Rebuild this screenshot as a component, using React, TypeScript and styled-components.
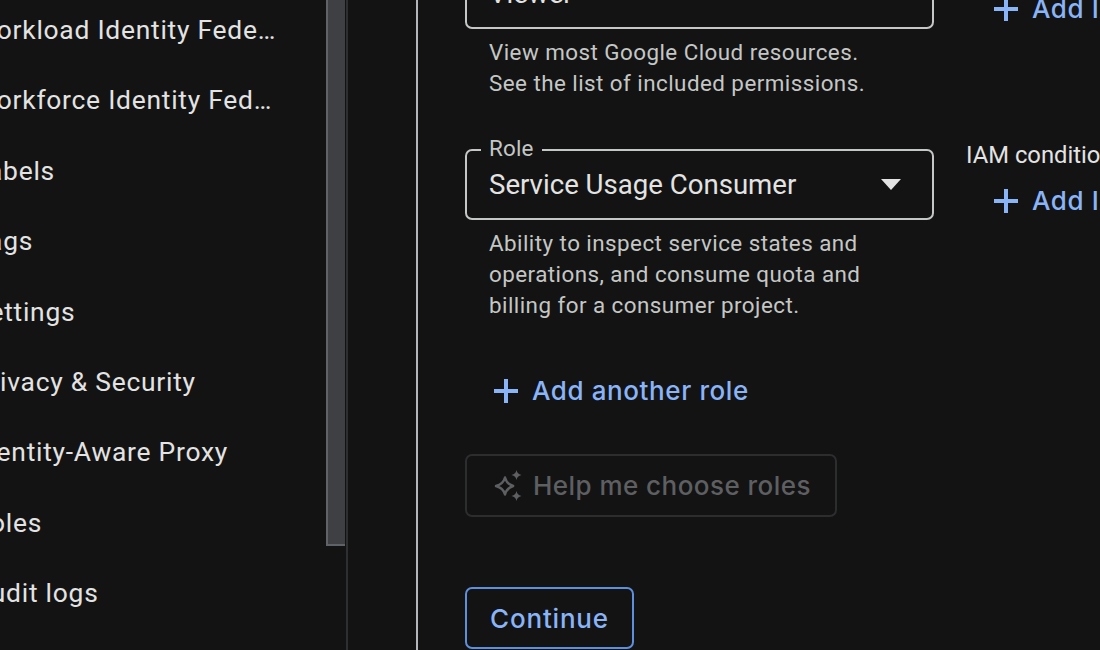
import React from "react";
import styled, { createGlobalStyle } from "styled-components";

const GlobalStyle = createGlobalStyle`
  html, body { margin: 0; padding: 0; background: #131314; }
  * { box-sizing: border-box; }
`;

const Page = styled.div`
  display: flex;
  width: 1100px;
  height: 650px;
  overflow: hidden;
  background: #131314;
  font-family: Roboto, "Liberation Sans", sans-serif;
  color: #e3e3e3;
`;

const Sidebar = styled.nav`
  position: relative;
  flex: none;
  width: 348px;
  height: 100%;
  overflow: hidden;
  border-right: 2px solid #2d2f31;
`;

const NavList = styled.div`
  display: flex;
  flex-direction: column;
  width: 306px;
  margin: -5px 0 0 -27px;
`;

const NavItem = styled.div`
  height: 70.4px;
  line-height: 70.4px;
  font-size: 26.4px;
  letter-spacing: 0.75px;
  color: #e3e3e3;
  white-space: nowrap;
  overflow: hidden;
  text-overflow: ellipsis;
`;

const ScrollThumb = styled.div`
  position: absolute;
  top: 0;
  left: 326px;
  width: 19px;
  height: 546px;
  background: #3e4043;
  border: 2px solid #5f6368;
  border-top: none;
  border-right: none;
`;

const Content = styled.main`
  flex: none;
  margin-left: 68px;
  border-left: 2px solid #b4b6b9;
  padding: 0 0 0 47px;
  height: 100%;
  width: 684px;
`;

const Form = styled.div`
  display: flex;
  flex-direction: column;
  margin-top: -42px;
`;

const RoleRow = styled.div`
  display: grid;
  grid-template-columns: 469px 300px;
  column-gap: 32px;
  margin-bottom: 50px;
  width: 800px;
`;

const Field = styled.div`
  position: relative;
  display: flex;
  align-items: center;
  justify-content: space-between;
  height: 71px;
  padding: 0 31px 0 22px;
  border: 2px solid #c4c7c5;
  border-radius: 7px;
  font-size: 27.6px;
  line-height: 1;
`;

const FieldLabel = styled.span`
  position: absolute;
  top: -16px;
  left: 14px;
  padding: 0 8px 0 8px;
  background: #131314;
  font-size: 22.4px;
  line-height: 26px;
  letter-spacing: 0.2px;
  color: #c4c7c5;
`;

const Hint = styled.p`
  margin: 8px 0 0;
  padding-left: 24px;
  font-size: 22.4px;
  line-height: 31px;
  letter-spacing: 0.45px;
  color: #c4c7c5;
`;

const SideColumn = styled.div<{ $first?: boolean }>`
  display: flex;
  flex-direction: column;
  margin-top: ${({ $first }) => ($first ? "20px" : "-9px")};
`;

const SideLabel = styled.div`
  font-size: 23.8px;
  line-height: 30px;
  white-space: nowrap;
  color: #e3e3e3;
`;

const AddLink = styled.div<{ $indent: number }>`
  display: flex;
  align-items: center;
  gap: 14px;
  padding-left: ${({ $indent }) => $indent}px;
  font-family: Inter, Roboto, sans-serif;
  font-weight: 500;
  font-size: 26px;
  letter-spacing: 0.6px;
  line-height: 42px;
  color: #8ab4f8;
  white-space: nowrap;
`;

const SideAdd = styled(AddLink)`
  margin-top: 10px;
`;

const AnotherRole = styled(AddLink)`
  margin-top: -1px;
`;

const HelpButton = styled.div`
  display: flex;
  align-items: center;
  gap: 9px;
  width: 372px;
  height: 63px;
  margin-top: 42px;
  padding-left: 26px;
  border: 2px solid #2c2d2f;
  border-radius: 7px;
  font-family: Inter, Roboto, sans-serif;
  font-weight: 500;
  font-size: 26px;
  letter-spacing: 0.45px;
  color: #5e5f61;
  white-space: nowrap;
`;

const ContinueButton = styled.div`
  display: flex;
  align-items: center;
  justify-content: center;
  width: 169px;
  height: 62px;
  margin-top: 70px;
  border: 2px solid #5d8fdc;
  border-radius: 7px;
  font-family: Inter, Roboto, sans-serif;
  font-weight: 500;
  font-size: 26px;
  letter-spacing: 0.8px;
  color: #8ab4f8;
`;

const PlusIcon = () => (
  <svg width="24" height="24" viewBox="0 0 24 24" fill="#8ab4f8" style={{ flex: "none" }}>
    <path d="M24 14h-10v10h-4V14H0v-4h10V0h4v10h10v4z" />
  </svg>
);

const CaretIcon = () => (
  <svg width="20" height="11" viewBox="0 0 20 11" fill="#e3e3e3" style={{ flex: "none" }}>
    <path d="M0 0h20L10 11z" />
  </svg>
);

const SparkIcon = () => (
  <svg width="31" height="32" viewBox="0 0 31 32" fill="none" style={{ flex: "none" }}>
    <path d="M12 7.5c1.2 4.8 3.4 7 8.2 8.5-4.8 1.5-7 3.7-8.2 8.5C10.8 19.700 8.600 17.500 3 16c5.600-1.500 7.800-3.700 9-8.500z" stroke="#5e5f61" strokeWidth="2.400" strokeLinejoin="round" />
    <path d="M23.500 0c.7 3 1.800 4.100 5 5-3.200.9-4.300 2-5 5-.7-3-1.800-4.100-5-5 3.200-.9 4.300-2 5-5z" fill="#5e5f61" />
    <path d="M23.500 21c.7 3 1.800 4.100 5 5-3.200.9-4.300 2-5 5-.7-3-1.800-4.100-5-5 3.200-.9 4.300-2 5-5z" fill="#5e5f61" />
  </svg>
);

const navItems = [
  "Workload Identity Federation",
  "Workforce Identity Federation",
  "Labels",
  "Tags",
  "Settings",
  "Privacy & Security",
  "Identity-Aware Proxy",
  "Roles",
  "Audit logs",
];

export default function App() {
  return (
    <Page>
      <GlobalStyle />
      <Sidebar>
        <NavList>
          {navItems.map((item) => (
            <NavItem key={item}>{item}</NavItem>
          ))}
        </NavList>
        <ScrollThumb />
      </Sidebar>
      <Content>
        <Form>
          <RoleRow>
            <div>
              <Field>
                Viewer
                <CaretIcon />
              </Field>
              <Hint>
                View most Google Cloud resources.
                <br />
                See the list of included permissions.
              </Hint>
            </div>
            <SideColumn $first>
              <SideAdd $indent={28}>
                <PlusIcon />
                Add IAM condition
              </SideAdd>
            </SideColumn>
          </RoleRow>
          <RoleRow>
            <div>
              <Field>
                <FieldLabel>Role</FieldLabel>
                Service Usage Consumer
                <CaretIcon />
              </Field>
              <Hint>
                Ability to inspect service states and
                <br />
                operations, and consume quota and
                <br />
                billing for a consumer project.
              </Hint>
            </div>
            <SideColumn>
              <SideLabel>IAM condition (optional)</SideLabel>
              <SideAdd $indent={28}>
                <PlusIcon />
                Add IAM condition
              </SideAdd>
            </SideColumn>
          </RoleRow>
          <AnotherRole $indent={29}>
            <PlusIcon />
            Add another role
          </AnotherRole>
          <HelpButton>
            <SparkIcon />
            Help me choose roles
          </HelpButton>
          <ContinueButton>Continue</ContinueButton>
        </Form>
      </Content>
    </Page>
  );
}
